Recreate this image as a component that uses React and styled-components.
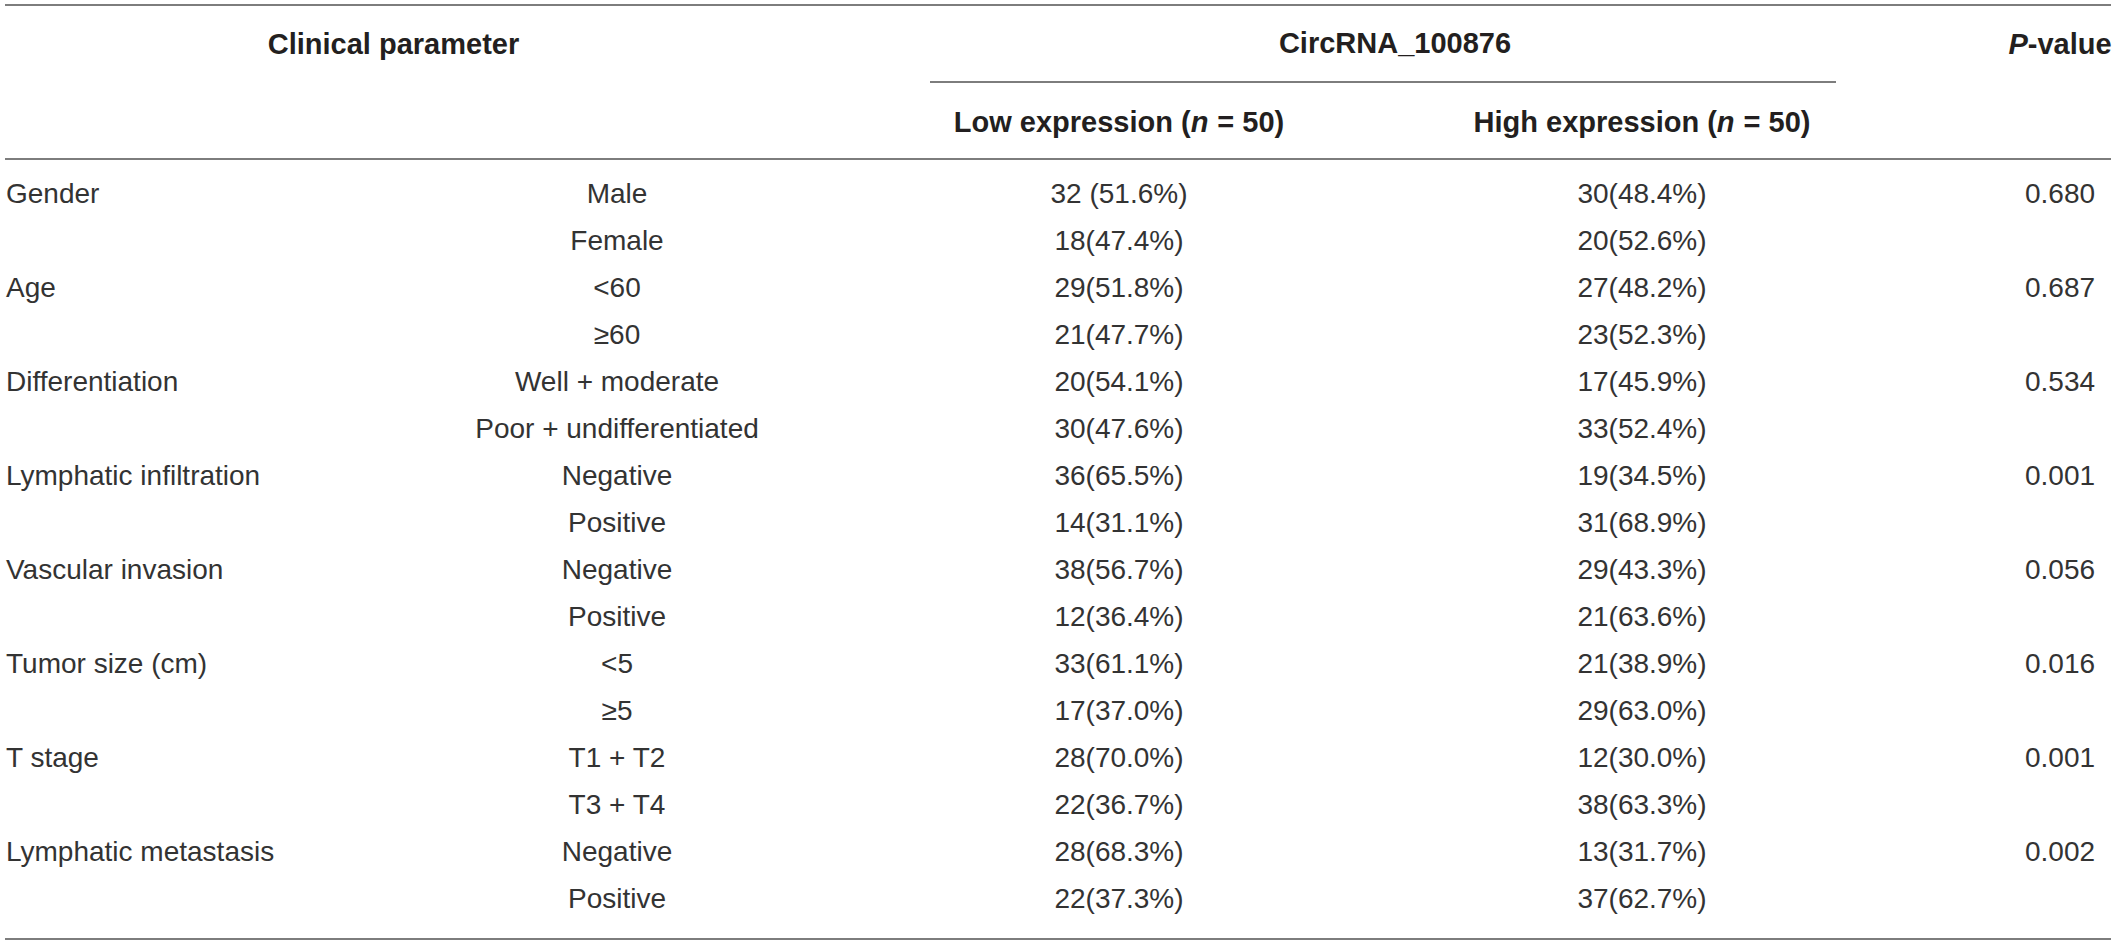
import React from "react";
import styled, { createGlobalStyle } from "styled-components";

const rows = [
  { label: "Gender", p: "0.680", items: [["Male", "32 (51.6%)", "30(48.4%)"], ["Female", "18(47.4%)", "20(52.6%)"]] },
  { label: "Age", p: "0.687", items: [["<60", "29(51.8%)", "27(48.2%)"], ["≥60", "21(47.7%)", "23(52.3%)"]] },
  { label: "Differentiation", p: "0.534", items: [["Well + moderate", "20(54.1%)", "17(45.9%)"], ["Poor + undifferentiated", "30(47.6%)", "33(52.4%)"]] },
  { label: "Lymphatic infiltration", p: "0.001", items: [["Negative", "36(65.5%)", "19(34.5%)"], ["Positive", "14(31.1%)", "31(68.9%)"]] },
  { label: "Vascular invasion", p: "0.056", items: [["Negative", "38(56.7%)", "29(43.3%)"], ["Positive", "12(36.4%)", "21(63.6%)"]] },
  { label: "Tumor size (cm)", p: "0.016", items: [["<5", "33(61.1%)", "21(38.9%)"], ["≥5", "17(37.0%)", "29(63.0%)"]] },
  { label: "T stage", p: "0.001", items: [["T1 + T2", "28(70.0%)", "12(30.0%)"], ["T3 + T4", "22(36.7%)", "38(63.3%)"]] },
  { label: "Lymphatic metastasis", p: "0.002", items: [["Negative", "28(68.3%)", "13(31.7%)"], ["Positive", "22(37.3%)", "37(62.7%)"]] },
];

const App = () => {
  return (
    <Page>
      <GlobalStyle />
      <Table>
        <Head>
          <HeadCell $col="1 / 3">Clinical parameter</HeadCell>
          <GroupCell>CircRNA_100876</GroupCell>
          <HeadCell $col="6 / 7">
            <Em>P</Em>-value
          </HeadCell>
          <SubCell $col="3 / 4">
            Low expression (<Em $gap>n</Em>= 50)
          </SubCell>
          <SubCell $col="4 / 5">
            High expression (<Em $gap>n</Em>= 50)
          </SubCell>
        </Head>
        <Body>
          {rows.map((group) =>
            group.items.map((item, i) => (
              <Row key={group.label + i}>
                <Label>{i === 0 ? group.label : ""}</Label>
                <Cell>{item[0]}</Cell>
                <Cell>{item[1]}</Cell>
                <Cell>{item[2]}</Cell>
                <span />
                <Cell>{i === 0 ? group.p : ""}</Cell>
              </Row>
            ))
          )}
        </Body>
      </Table>
    </Page>
  );
};

export default App;

const GlobalStyle = createGlobalStyle`
  body {
    margin: 0;
    background: #ffffff;
  }
`;

const columns = "447px 330px 674px 372px 181px 102px";

const Page = styled.div`
  width: 2118px;
  padding: 4px 0 0 5px;
  box-sizing: border-box;
  font-family: "Liberation Sans", Arial, sans-serif;
`;

const Table = styled.div`
  width: 2106px;
  border-top: 2px solid #7d7d7d;
  border-bottom: 2px solid #7d7d7d;
`;

const Head = styled.div`
  display: grid;
  grid-template-columns: ${columns};
  grid-template-rows: 77px 75px;
  border-bottom: 2px solid #7d7d7d;
  font-size: 29px;
  font-weight: bold;
  color: #231f20;
`;

const Em = styled.i`
  margin-right: ${(p) => (p.$gap ? "9px" : "0")};
`;

const HeadCell = styled.div`
  grid-column: ${(p) => p.$col};
  grid-row: 1;
  display: flex;
  align-items: center;
  justify-content: center;
  white-space: pre;
`;

const GroupCell = styled.div`
  grid-column: 3 / 6;
  grid-row: 1;
  margin: 0 173px 0 148px;
  padding-left: 24px;
  border-bottom: 2px solid #7d7d7d;
  display: flex;
  align-items: center;
  justify-content: center;
  white-space: nowrap;
`;

const SubCell = styled.div`
  grid-column: ${(p) => p.$col};
  grid-row: 2;
  display: flex;
  align-items: center;
  justify-content: center;
  padding-top: 4px;
  white-space: pre;
`;

const Body = styled.div`
  padding: 10px 0 16px;
`;

const Row = styled.div`
  display: grid;
  grid-template-columns: ${columns};
  height: 47px;
  align-items: center;
  font-size: 28px;
  color: #333333;
`;

const Label = styled.div`
  padding-left: 1px;
  white-space: nowrap;
`;

const Cell = styled.div`
  display: flex;
  justify-content: center;
  white-space: nowrap;
`;
